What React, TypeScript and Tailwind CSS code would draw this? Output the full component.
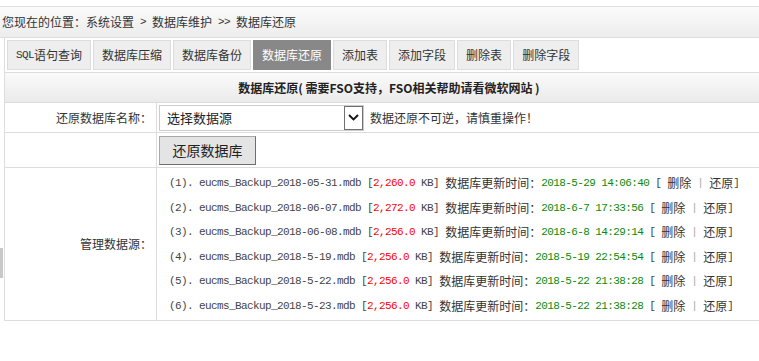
const cjk = "font-['Noto_Sans_CJK_SC',sans-serif]";
const mono = "font-['Liberation_Mono','Noto_Sans_CJK_SC',monospace] text-[11px] tracking-[-0.6px]";

const backups = [
  { file: "2018-05-31", size: "2,260.0", time: "2018-5-29 14:06:40" },
  { file: "2018-06-07", size: "2,272.0", time: "2018-6-7 17:33:56" },
  { file: "2018-06-08", size: "2,256.0", time: "2018-6-8 14:29:14" },
  { file: "2018-5-19", size: "2,256.0", time: "2018-5-19 22:54:54" },
  { file: "2018-5-22", size: "2,256.0", time: "2018-5-22 21:38:28" },
  { file: "2018-5-23", size: "2,256.0", time: "2018-5-22 21:38:28" },
];

const tabs = ["数据库压缩", "数据库备份", "数据库还原", "添加表", "添加字段", "删除表", "删除字段"];

export default function App() {
  return (
    <div className={`relative w-[759px] h-[361px] overflow-hidden bg-white text-[12px] text-[#333] ${cjk}`}>
      <div className="h-[6px]" />
      {/* breadcrumb */}
      <div className="h-[32px] border-y border-[#ddd] bg-gradient-to-b from-[#fbfbfb] to-[#ececec] flex items-center pl-[2px] whitespace-pre">
        您现在的位置：系统设置<span className={mono}> &gt; </span>数据库维护<span className={mono}> &gt;&gt; </span>数据库还原
      </div>

      <div className="w-[769px] ml-[4px] border-l border-[#ddd]">
        {/* tabs */}
        <div className="flex gap-[2px] pl-[2px] pt-[2px] pb-[2px]">
          <div className="h-[30px] px-[8px] flex items-center border border-[#ddd] bg-[#eee]">
            <span className={mono}>SQL</span>语句查询
          </div>
          {tabs.map((t) => (
            <div
              key={t}
              className={
                t === "数据库还原"
                  ? "h-[30px] px-[8px] flex items-center border border-[#888] bg-[#888] text-white"
                  : "h-[30px] px-[8px] flex items-center border border-[#ddd] bg-[#eee]"
              }
            >
              {t}
            </div>
          ))}
        </div>

        {/* table */}
        <div className="border-t border-[#ddd]">
          <div className="h-[30px] border-b border-[#ddd] bg-gradient-to-b from-[#fafafa] to-[#ebebeb] flex items-center justify-center font-bold text-[#222] whitespace-pre">
            数据库还原( 需要FSO支持，FSO相关帮助请看微软网站 )
          </div>

          <div className="flex h-[30px] border-b border-[#ddd]">
            <div className="w-[152px] border-r border-[#ddd] flex items-center justify-end pr-[4px]">还原数据库名称：</div>
            <div className="flex items-center pl-[2px]">
              <div className="w-[205px] h-[26px] border border-[#ccc] flex items-center">
                <span className="pl-[7px] text-[13px] text-[#222]">选择数据源</span>
                <div className="ml-auto w-[19px] h-[24px] border border-[#707070] bg-white flex items-center justify-center">
                  <svg width="11" height="7" viewBox="0 0 11 7" fill="none">
                    <path d="M1 1l4.5 4.5L10 1" stroke="#111" strokeWidth="1.8" />
                  </svg>
                </div>
              </div>
              <span className="ml-[6px]">数据还原不可逆，请慎重操作！</span>
            </div>
          </div>

          <div className="flex h-[35px] border-b border-[#ddd]">
            <div className="w-[152px] border-r border-[#ddd]" />
            <div className="pl-[2px] pt-[3px]">
              <button className="w-[97px] h-[29px] border border-[#a8a8a8] border-r-[#6e6e6e] border-b-[#6e6e6e] bg-[#e4e4e4] text-[14px] text-[#222]">
                还原数据库
              </button>
            </div>
          </div>

          <div className="flex h-[153px] border-b border-[#ddd]">
            <div className="w-[152px] border-r border-[#ddd] flex items-center justify-end pr-[4px]">管理数据源：</div>
            <div className="pl-[12px] pt-[3px]">
              {backups.map((b, i) => (
                <div key={i} className="h-[24.5px] flex items-center whitespace-pre text-[#333]">
                  <span className={`${mono} text-[#444]`}>({i + 1}). eucms_Backup_{b.file}.mdb [</span>
                  <span className={`${mono} text-[#f00]`}>{b.size}</span>
                  <span className={`${mono} text-[#444]`}> KB] </span>
                  <span>数据库更新时间：</span>
                  <span className={`${mono} text-[#0a8a0a]`}>{b.time}</span>
                  <span className={`${mono} text-[#444]`}> [ </span>
                  <span>删除</span>
                  <span className={mono}> </span>
                  <span className={`${mono} text-[#aaa]`}>|</span>
                  <span className={mono}> </span>
                  <span>还原</span>
                  <span className={`${mono} text-[#444]`}>]</span>
                </div>
              ))}
            </div>
          </div>
        </div>
      </div>

      {/* side frame handle */}
      <div className="absolute left-0 top-[248px] w-[3px] h-[30px] bg-[#c8c8c8]" />
    </div>
  );
}
